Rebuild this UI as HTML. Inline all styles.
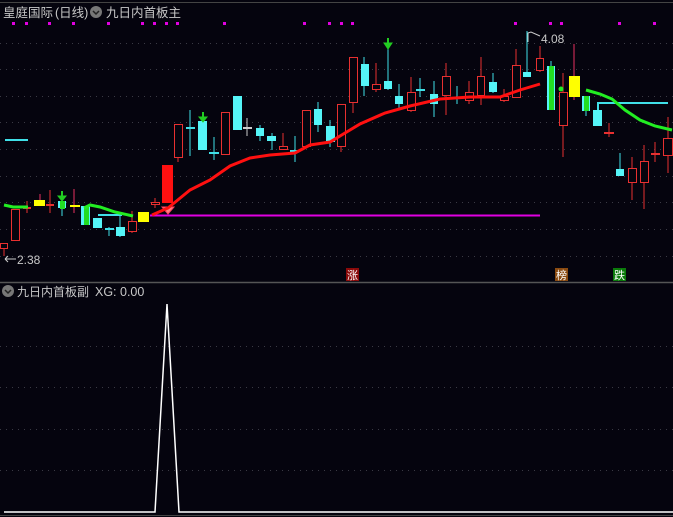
<!DOCTYPE html>
<html><head><meta charset="utf-8"><style>
html,body{margin:0;padding:0;background:#05040e;width:673px;height:517px;overflow:hidden}
svg{display:block}
text{font-family:"Liberation Sans","Noto Sans CJK SC",sans-serif}
</style></head><body>
<svg width="673" height="517" viewBox="0 0 673 517" xmlns="http://www.w3.org/2000/svg">
<rect width="673" height="517" fill="#05040e"/>
<line x1="0" y1="2.5" x2="673" y2="2.5" stroke="#444" stroke-width="1"/>
<g stroke="#3a3a44" stroke-width="1" stroke-dasharray="1,5">
<line x1="0" y1="43.5" x2="673" y2="43.5"/><line x1="0" y1="69.5" x2="673" y2="69.5"/>
<line x1="0" y1="96.5" x2="673" y2="96.5"/><line x1="0" y1="122.5" x2="673" y2="122.5"/>
<line x1="0" y1="149.5" x2="673" y2="149.5"/><line x1="0" y1="176.5" x2="673" y2="176.5"/>
<line x1="0" y1="202.5" x2="673" y2="202.5"/><line x1="0" y1="229.5" x2="673" y2="229.5"/>
<line x1="0" y1="256.5" x2="673" y2="256.5"/>
<line x1="0" y1="346.5" x2="673" y2="346.5"/><line x1="0" y1="387.5" x2="673" y2="387.5"/>
<line x1="0" y1="429.5" x2="673" y2="429.5"/><line x1="0" y1="470.5" x2="673" y2="470.5"/>
</g>
<line x1="0" y1="282.5" x2="673" y2="282.5" stroke="#555" stroke-width="1.5"/>
<line x1="0" y1="515.5" x2="673" y2="515.5" stroke="#444" stroke-width="1"/>

<text x="3" y="17" font-size="12.5" fill="#c8c8c8">皇庭国际</text>
<text x="55" y="17" font-size="12.5" fill="#c8c8c8">(日线)</text>
<circle cx="96" cy="12" r="6" fill="#777"/><path d="M93 11 L96 14 L99 11" stroke="#222" stroke-width="1.5" fill="none"/>
<text x="106" y="17" font-size="12.5" fill="#c8c8c8">九日内首板主</text>

<g fill="#e000e0">
<rect x="12" y="22" width="3" height="3"/><rect x="25" y="22" width="3" height="3"/><rect x="48" y="22" width="3" height="3"/><rect x="72" y="22" width="3" height="3"/><rect x="107" y="22" width="3" height="3"/><rect x="141" y="22" width="3" height="3"/><rect x="153" y="22" width="3" height="3"/><rect x="165" y="22" width="3" height="3"/><rect x="176" y="22" width="3" height="3"/><rect x="223" y="22" width="3" height="3"/><rect x="303" y="22" width="3" height="3"/><rect x="328" y="22" width="3" height="3"/><rect x="340" y="22" width="3" height="3"/><rect x="351" y="22" width="3" height="3"/><rect x="514" y="22" width="3" height="3"/><rect x="549" y="22" width="3" height="3"/><rect x="560" y="22" width="3" height="3"/><rect x="618" y="22" width="3" height="3"/><rect x="653" y="22" width="3" height="3"/>
</g>

<line x1="150" y1="215.5" x2="540" y2="215.5" stroke="#e000e0" stroke-width="2"/>
<line x1="5" y1="140" x2="28" y2="140" stroke="#40e0e8" stroke-width="2"/>
<polyline points="598,110 598,103 668,103" stroke="#40e0e8" stroke-width="2" fill="none"/>
<line x1="98" y1="215" x2="122" y2="215" stroke="#40e0e8" stroke-width="2"/>

<g stroke-width="1">
<line x1="4" y1="243" x2="4" y2="256" stroke="#e83030"/>
<line x1="27" y1="201" x2="27" y2="213" stroke="#e83030"/>
<line x1="40" y1="194" x2="40" y2="206" stroke="#e83060"/>
<line x1="50" y1="190" x2="50" y2="213" stroke="#e83030"/>
<line x1="62" y1="201" x2="62" y2="216" stroke="#40e0e8"/>
<line x1="74" y1="189" x2="74" y2="213" stroke="#e83060"/>
<line x1="109" y1="227" x2="109" y2="236" stroke="#40e0e8"/>
<line x1="120" y1="212" x2="120" y2="237" stroke="#40e0e8"/>
<line x1="132" y1="211" x2="132" y2="233" stroke="#e83030"/>
<line x1="155" y1="198" x2="155" y2="208" stroke="#e83030"/>
<line x1="178" y1="157" x2="178" y2="162" stroke="#e83030"/>
<line x1="190" y1="110" x2="190" y2="156" stroke="#40e0e8"/>
<line x1="214" y1="137" x2="214" y2="160" stroke="#40e0e8"/>
<line x1="247" y1="118" x2="247" y2="136" stroke="#ccc"/>
<line x1="260" y1="125" x2="260" y2="141" stroke="#40e0e8"/>
<line x1="272" y1="133" x2="272" y2="150" stroke="#40e0e8"/>
<line x1="283" y1="133" x2="283" y2="150" stroke="#e83030"/>
<line x1="295" y1="136" x2="295" y2="162" stroke="#40e0e8"/>
<line x1="318" y1="102" x2="318" y2="132" stroke="#40e0e8"/>
<line x1="330" y1="120" x2="330" y2="147" stroke="#40e0e8"/>
<line x1="341" y1="146" x2="341" y2="152" stroke="#e83030"/>
<line x1="353" y1="102" x2="353" y2="113" stroke="#e83030"/>
<line x1="364" y1="57" x2="364" y2="96" stroke="#40e0e8"/>
<line x1="376" y1="63" x2="376" y2="92" stroke="#e83030"/>
<line x1="388" y1="48" x2="388" y2="90" stroke="#40e0e8"/>
<line x1="399" y1="84" x2="399" y2="108" stroke="#40e0e8"/>
<line x1="411" y1="77" x2="411" y2="112" stroke="#e83030"/>
<line x1="420" y1="78" x2="420" y2="97" stroke="#40e0e8"/>
<line x1="434" y1="81" x2="434" y2="117" stroke="#40e0e8"/>
<line x1="446" y1="63" x2="446" y2="115" stroke="#e83030"/>
<line x1="457" y1="86" x2="457" y2="104" stroke="#40e0e8"/>
<line x1="469" y1="81" x2="469" y2="104" stroke="#e83030"/>
<line x1="481" y1="57" x2="481" y2="105" stroke="#e83030"/>
<line x1="493" y1="73" x2="493" y2="93" stroke="#40e0e8"/>
<line x1="504" y1="89" x2="504" y2="102" stroke="#e83030"/>
<line x1="516" y1="49" x2="516" y2="98" stroke="#e83030"/>
<line x1="527" y1="31" x2="527" y2="77" stroke="#40e0e8"/>
<line x1="540" y1="46" x2="540" y2="72" stroke="#e83030"/>
<line x1="551" y1="61" x2="551" y2="110" stroke="#40e0e8"/>
<line x1="563" y1="73" x2="563" y2="157" stroke="#e83030"/>
<line x1="574" y1="44" x2="574" y2="100" stroke="#e83060"/>
<line x1="586" y1="96" x2="586" y2="116" stroke="#40e0e8"/>
<line x1="609" y1="123" x2="609" y2="137" stroke="#e83030"/>
<line x1="620" y1="153" x2="620" y2="176" stroke="#40e0e8"/>
<line x1="632" y1="157" x2="632" y2="200" stroke="#e83030"/>
<line x1="644" y1="145" x2="644" y2="209" stroke="#e83030"/>
<line x1="655" y1="142" x2="655" y2="162" stroke="#e83030"/>
<line x1="668" y1="117" x2="668" y2="173" stroke="#e83030"/>
</g>
<g fill="#05040e" stroke="#e83030" stroke-width="1">
<rect x="0.5" y="243.5" width="7" height="5"/>
<rect x="11.5" y="209.5" width="8" height="31"/>
<rect x="128.5" y="221.5" width="8" height="10"/>
<rect x="151.5" y="202.5" width="8" height="2"/>
<rect x="174.5" y="124.5" width="8" height="33"/>
<rect x="221.5" y="112.5" width="8" height="42"/>
<rect x="279.5" y="146.5" width="8" height="3"/>
<rect x="302.5" y="110.5" width="8" height="36"/>
<rect x="337.5" y="104.5" width="8" height="42"/>
<rect x="349.5" y="57.5" width="8" height="45"/>
<rect x="372.5" y="84.5" width="8" height="5"/>
<rect x="407.5" y="92.5" width="8" height="18"/>
<rect x="442.5" y="76.5" width="8" height="19"/>
<rect x="465.5" y="92.5" width="8" height="8"/>
<rect x="477.5" y="76.5" width="7" height="19"/>
<rect x="500.5" y="96.5" width="8" height="4"/>
<rect x="512.5" y="65.5" width="8" height="32"/>
<rect x="536.5" y="58.5" width="7" height="12"/>
<rect x="559.5" y="92.5" width="8" height="33"/>
<rect x="628.5" y="168.5" width="8" height="14"/>
<rect x="640.5" y="161.5" width="8" height="21"/>
<rect x="663.5" y="138.5" width="9" height="17"/>
</g>
<g stroke-width="2">
<line x1="23" y1="208" x2="31" y2="208" stroke="#e83030"/>
<line x1="46" y1="205" x2="54" y2="205" stroke="#e83030"/>
<line x1="70" y1="206" x2="80" y2="206" stroke="#ffff00"/>
<line x1="105" y1="229" x2="114" y2="229" stroke="#40e0e8"/>
<line x1="186" y1="128" x2="195" y2="128" stroke="#40e0e8"/>
<line x1="209" y1="153" x2="219" y2="153" stroke="#40e0e8"/>
<line x1="243" y1="128" x2="252" y2="128" stroke="#ccc"/>
<line x1="290" y1="151" x2="300" y2="151" stroke="#40e0e8"/>
<line x1="416" y1="90" x2="425" y2="90" stroke="#40e0e8"/>
<line x1="453" y1="98" x2="462" y2="98" stroke="#40e0e8"/>
<line x1="604" y1="133" x2="614" y2="133" stroke="#e83030"/>
<line x1="651" y1="154" x2="660" y2="154" stroke="#e83030"/>
</g>
<g fill="#55f5f8">
<rect x="58" y="201" width="8" height="7"/>
<rect x="81" y="206" width="9" height="19"/>
<rect x="93" y="218" width="9" height="10"/>
<rect x="116" y="227" width="9" height="9"/>
<rect x="198" y="121" width="9" height="29"/>
<rect x="233" y="96" width="9" height="34"/>
<rect x="256" y="128" width="8" height="8"/>
<rect x="267" y="136" width="9" height="5"/>
<rect x="314" y="109" width="8" height="16"/>
<rect x="326" y="126" width="9" height="16"/>
<rect x="361" y="64" width="8" height="22"/>
<rect x="384" y="81" width="8" height="8"/>
<rect x="395" y="96" width="8" height="8"/>
<rect x="430" y="94" width="8" height="10"/>
<rect x="489" y="82" width="8" height="10"/>
<rect x="523" y="72" width="8" height="5"/>
<rect x="547" y="66" width="8" height="44"/>
<rect x="582" y="96" width="8" height="15"/>
<rect x="593" y="110" width="9" height="16"/>
<rect x="616" y="169" width="8" height="7"/>
</g>
<g fill="#22dd22">
<rect x="60" y="201" width="5" height="8"/><rect x="84" y="207" width="5" height="18"/>
<rect x="549" y="66" width="5" height="44"/><rect x="584" y="96" width="5" height="15"/>
</g>
<g fill="#ffff00">
<rect x="34" y="200" width="11" height="6"/>
<rect x="138" y="212" width="11" height="10"/>
<rect x="569" y="76" width="11" height="21"/>
</g>
<rect x="162" y="165" width="11" height="38" fill="#ff1010"/>
<path d="M162 207 L174 207 L168 214 Z" fill="#ff8080" stroke="#ff4060"/>

<polyline points="152,215 168,208 190,190 210,180 230,166 250,158 270,155 295,153 310,145 330,142 345,133 360,124 385,113 410,106 440,99 470,97 500,97 520,90 540,84" stroke="#ff1010" stroke-width="3" fill="none"/>
<polyline points="4,205 13,207 28,207" stroke="#22ee22" stroke-width="3" fill="none"/>
<polyline points="84,208 90,205 100,207 115,212 133,216" stroke="#22ee22" stroke-width="3" fill="none"/>
<polyline points="586,90 600,94 612,99 625,110 640,120 655,126 672,130" stroke="#22ee22" stroke-width="3" fill="none"/>
<circle cx="561" cy="89" r="2.5" fill="#22ee22"/>

<g fill="#22cc22" stroke="#22cc22">
<line x1="62" y1="191" x2="62" y2="197" stroke-width="2"/><path d="M58 196 L66 196 L62 201 Z"/>
<line x1="203" y1="112" x2="203" y2="118" stroke-width="2"/><path d="M199 117 L207 117 L203 122 Z"/>
<line x1="388" y1="38" x2="388" y2="44" stroke-width="2"/><path d="M384 43 L392 43 L388 49 Z"/>
</g>

<path d="M528 42 L528 33 L531 32 L540 36" stroke="#ccc" fill="none"/>
<text x="541" y="43" font-size="12" fill="#c8c8c8">4.08</text>
<path d="M5 259 L16 259 M5 259 L8 256 M5 259 L8 262" stroke="#ccc" fill="none"/>
<text x="17" y="264" font-size="12" fill="#c8c8c8">2.38</text>

<rect x="346" y="268" width="13" height="13" fill="#8a0a0a"/><text x="347" y="279" font-size="11" fill="#fff">涨</text>
<rect x="555" y="268" width="13" height="13" fill="#8a4a10"/><text x="556" y="279" font-size="11" fill="#fff">榜</text>
<rect x="613" y="268" width="13" height="13" fill="#0a7a0a"/><text x="614" y="279" font-size="11" fill="#fff">跌</text>

<circle cx="8" cy="291" r="6" fill="#777"/><path d="M5 290 L8 293 L11 290" stroke="#222" stroke-width="1.5" fill="none"/>
<text x="17" y="296" font-size="12" fill="#c8c8c8">九日内首板副</text>
<text x="95" y="296" font-size="12.5" fill="#c8c8c8">XG: 0.00</text>

<polyline points="4,512 155,512 167,304 179,512 673,512" stroke="#fff" stroke-width="1.5" fill="none"/>
</svg>
</body></html>
